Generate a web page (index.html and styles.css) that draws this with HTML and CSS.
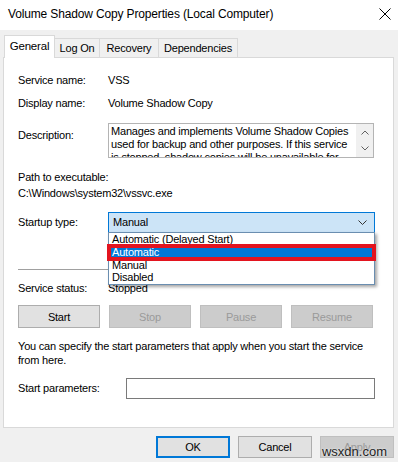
FILE: index.html
```html
<!DOCTYPE html>
<html lang="en">
<head>
  <meta charset="UTF-8">
  <title>Volume Shadow Copy Properties (Local Computer)</title>
  <link rel="stylesheet" href="styles.css">
</head>
<body>
  <div class="window">
    <!-- Title bar -->
    <div class="titlebar">
      <span class="title">Volume Shadow Copy Properties (Local Computer)</span>
      <svg class="close" width="12" height="12" viewBox="0 0 12 12">
        <path d="M0.5 0.5 L11.5 11.5 M11.5 0.5 L0.5 11.5" stroke="#000" stroke-width="1" fill="none"/>
      </svg>
    </div>

    <div class="dialog">
      <!-- Tabs -->
      <div class="tabs">
        <div class="tab tab-active tab-general">General</div>
        <div class="tab tab-logon">Log On</div>
        <div class="tab tab-recovery">Recovery</div>
        <div class="tab tab-deps">Dependencies</div>
      </div>

      <!-- General page -->
      <div class="panel">
        <div class="row row-first">
          <span class="label">Service name:</span>
          <span class="value">VSS</span>
        </div>
        <div class="row row-display">
          <span class="label">Display name:</span>
          <span class="value">Volume Shadow Copy</span>
        </div>
        <div class="row row-desc">
          <span class="label label-desc">Description:</span>
          <div class="desc-box">
            <div class="desc-text">Manages and implements Volume Shadow Copies used for backup and other purposes. If this service is stopped, shadow copies will be unavailable for backup and the backup may fail.</div>
            <div class="desc-scroll">
              <svg width="8" height="5" viewBox="0 0 8 5"><path d="M0.5 4.5 L4 1 L7.5 4.5" stroke="#606060" fill="none"/></svg>
              <svg width="8" height="5" viewBox="0 0 8 5"><path d="M0.5 0.5 L4 4 L7.5 0.5" stroke="#606060" fill="none"/></svg>
            </div>
          </div>
        </div>
        <div class="path-label">Path to executable:</div>
        <div class="path-value">C:\Windows\system32\vssvc.exe</div>

        <div class="row row-startup">
          <span class="label">Startup type:</span>
          <div class="combo">
            <div class="combo-box">
              <span>Manual</span>
              <svg width="9" height="5" viewBox="0 0 9 5"><path d="M0.5 0.5 L4.5 4.5 L8.5 0.5" stroke="#333" fill="none"/></svg>
            </div>
            <!-- Open dropdown list -->
            <div class="combo-list">
              <div class="combo-item">Automatic (Delayed Start)</div>
              <div class="combo-item combo-item-selected">Automatic</div>
              <div class="combo-item">Manual</div>
              <div class="combo-item">Disabled</div>
            </div>
          </div>
        </div>

        <div class="separator"></div>

        <div class="row row-status">
          <span class="label">Service status:</span>
          <span class="value">Stopped</span>
        </div>

        <div class="service-buttons">
          <button class="btn">Start</button>
          <button class="btn btn-disabled">Stop</button>
          <button class="btn btn-disabled">Pause</button>
          <button class="btn btn-disabled">Resume</button>
        </div>

        <p class="hint">You can specify the start parameters that apply when you start the service from here.</p>

        <div class="row row-params">
          <span class="label label-params">Start parameters:</span>
          <div class="params-input"></div>
        </div>
      </div>

      <!-- Dialog buttons -->
      <div class="actions">
        <button class="btn btn-action btn-default">OK</button>
        <button class="btn btn-action">Cancel</button>
        <button class="btn btn-action btn-disabled">Apply</button>
        <span class="watermark">wsxdn.com</span>
      </div>
    </div>
  </div>
</body>
</html>
```

FILE: styles.css
```css
:root {
  --win-bg: #f0f0f0;
  --win-border: #d9d9d9;
  --accent: #0078d7;
  --accent-light: #cce4f7;
  --btn-bg: #e1e1e1;
  --btn-border: #adadad;
  --disabled-bg: #cccccc;
  --disabled-border: #bfbfbf;
  --disabled-text: #9a9a9a;
}

body, html {
  margin: 0;
  padding: 0;
  background: var(--win-bg);
  font-family: 'Liberation Sans', Arial, sans-serif;
  font-size: 11px;
  letter-spacing: -0.2px;
  color: #000;
}

.window {
  width: 398px;
  height: 462px;
  overflow: hidden;
}

/* Title bar */
.titlebar {
  height: 30px;
  background: #fff;
  display: flex;
  align-items: center;
  justify-content: space-between;
  padding: 0 7px 0 8px;
  box-sizing: border-box;
}

.title {
  font-size: 12px;
  letter-spacing: -0.15px;
  margin-top: -2px;
}

.close {
  margin-top: -3px;
}

/* Tabs */
.tabs {
  display: flex;
  align-items: flex-end;
  height: 22px;
  margin-top: 5px;
  padding-left: 4px;
}

.tab {
  box-sizing: border-box;
  height: 19px;
  background: var(--win-bg);
  border: 1px solid var(--win-border);
  border-bottom: none;
  border-left: none;
  text-align: center;
  line-height: 18px;
}

.tab-active {
  height: 23px;
  margin-bottom: -1px;
  background: #fff;
  border-left: 1px solid var(--win-border);
  position: relative;
  z-index: 1;
  line-height: 20px;
  font-size: 11.5px;
}

.tab-general { width: 51px; }
.tab-logon { width: 45px; }
.tab-recovery { width: 59px; }
.tab-deps { width: 79px; }

/* Page */
.panel {
  box-sizing: border-box;
  width: 391px;
  margin-left: 3px;
  background: #fff;
  border: 1px solid var(--win-border);
  padding: 16px 0 28px 14px;
}

.row {
  display: flex;
  align-items: center;
  line-height: 13px;
}

.label {
  width: 90px;
  flex: none;
}

.row-display { margin-top: 10px; }

.row-desc {
  margin-top: 13px;
  align-items: flex-start;
}

.label-desc { padding-top: 6px; }

.desc-box {
  box-sizing: border-box;
  width: 266px;
  height: 35px;
  border: 1px solid #b4b4b4;
  display: flex;
  overflow: hidden;
}

.desc-text {
  flex: 1;
  padding: 1px 2px 0 2px;
  line-height: 13px;
}

.desc-scroll {
  width: 17px;
  background: var(--win-bg);
  display: flex;
  flex-direction: column;
  align-items: center;
  gap: 11px;
  padding-top: 6px;
  box-sizing: border-box;
}

.path-label {
  margin-top: 13px;
  line-height: 13px;
}

.path-value {
  margin-top: 3px;
  line-height: 13px;
}

/* Startup type combo */
.row-startup { margin-top: 12px; }

.combo {
  position: relative;
  width: 267px;
}

.combo-box {
  box-sizing: border-box;
  height: 21px;
  background: var(--accent-light);
  border: 1px solid var(--accent);
  display: flex;
  align-items: center;
  justify-content: space-between;
  padding: 0 7px 0 4px;
}

.combo-list {
  position: absolute;
  top: 20px;
  left: 0;
  right: 0;
  background: #fff;
  border: 1px solid #6a8eb0;
  box-shadow: 2px 2px 3px rgba(0, 0, 0, 0.35);
  z-index: 5;
}

.combo-item {
  height: 12.75px;
  line-height: 13px;
  padding-left: 3px;
}

.combo-item-selected {
  background: var(--accent);
  color: #fff;
  outline: 4px solid #e3141f;
  outline-offset: -2px;
  position: relative;
}

.separator {
  height: 1px;
  background: #a0a0a0;
  margin: 36px 18px 0 0;
}

.row-status { margin-top: 12px; }

/* Buttons */
.service-buttons {
  display: flex;
  gap: 9px;
  margin-top: 10px;
}

.btn {
  box-sizing: border-box;
  width: 82px;
  height: 23px;
  background: var(--btn-bg);
  border: 1px solid var(--btn-border);
  font-family: inherit;
  font-size: 11px;
  letter-spacing: -0.2px;
  color: #000;
  padding: 0;
}

.btn-disabled {
  background: var(--disabled-bg);
  border-color: var(--disabled-border);
  color: var(--disabled-text);
}

.hint {
  margin: 11px 20px 0 0;
  line-height: 14px;
}

.row-params { margin-top: 11px; }

.label-params { width: 108px; }

.params-input {
  box-sizing: border-box;
  width: 249px;
  height: 21px;
  border: 1px solid #7a7a7a;
}

/* Dialog buttons */
.actions {
  display: flex;
  justify-content: flex-end;
  gap: 8px;
  margin-top: 8px;
  padding-right: 4px;
  position: relative;
}

.btn-action {
  width: 74px;
  height: 22px;
}

.btn-default {
  border: 2px solid var(--accent);
}

.watermark {
  position: absolute;
  right: 11px;
  top: 8px;
  font-size: 13px;
  letter-spacing: 0;
  color: #222;
  text-shadow: 0 0 2px #fff;
}
```
